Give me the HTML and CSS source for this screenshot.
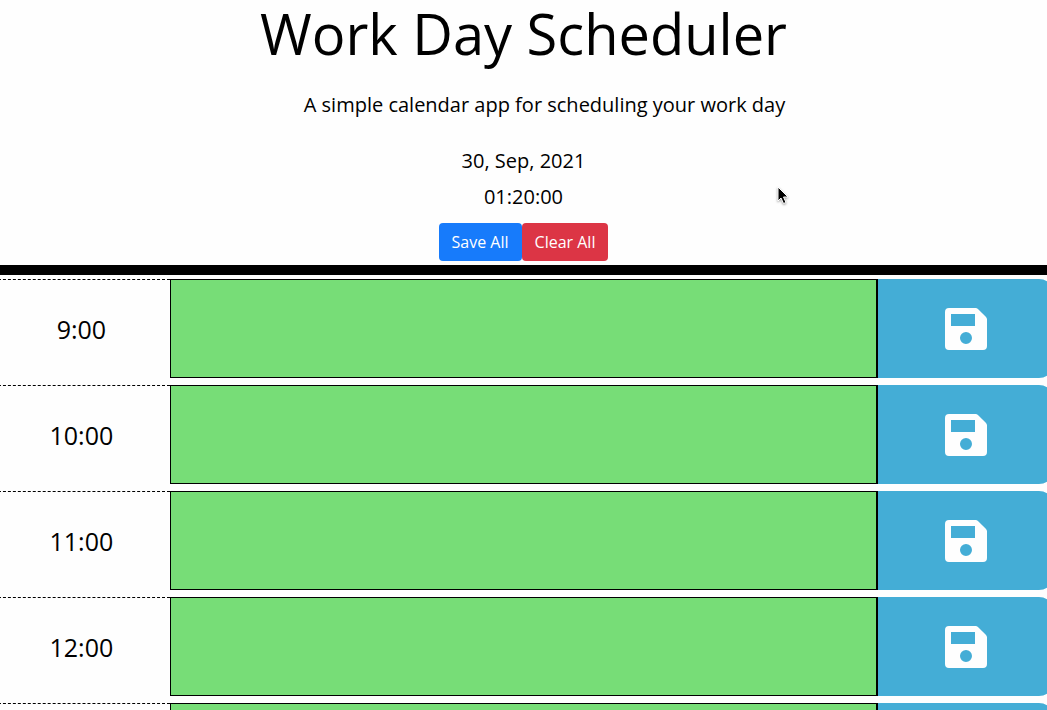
FILE: index.html
```html
<!DOCTYPE html>
<html lang="en">
<head>
<meta charset="utf-8">
<title>Work Day Scheduler</title>
<link rel="stylesheet" href="styles.css">
</head>
<body>
<svg class="icon-defs" aria-hidden="true">
  <symbol id="save" viewBox="0 0 42 42">
    <path fill-rule="evenodd" d="M4 0H30.500Q32 0 33.200 1.200L40.800 8.800Q42 10 42 11.500V38Q42 42 38 42H4Q0 42 0 38V4Q0 0 4 0ZM6 6V18H30V6ZM21 24A6 6 0 1 0 21 36A6 6 0 1 0 21 24Z"/>
  </symbol>
</svg>
<header class="header">
  <h1 class="title">Work Day Scheduler</h1>
  <p class="lead">A simple calendar app for scheduling your work day</p>
  <p class="date">30, Sep, 2021</p>
  <p class="clock">01:20:00</p>
  <div class="actions">
    <button class="btn btn-save" type="button">Save All</button>
    <button class="btn btn-clear" type="button">Clear All</button>
  </div>
</header>
<main class="schedule">
  <div class="row">
    <label class="hour" for="h9">9:00</label>
    <textarea class="task" id="h9"></textarea>
    <button class="save" type="button" aria-label="Save 9:00"><svg class="icon"><use href="#save"/></svg></button>
  </div>
  <div class="row">
    <label class="hour" for="h10">10:00</label>
    <textarea class="task" id="h10"></textarea>
    <button class="save" type="button" aria-label="Save 10:00"><svg class="icon"><use href="#save"/></svg></button>
  </div>
  <div class="row">
    <label class="hour" for="h11">11:00</label>
    <textarea class="task" id="h11"></textarea>
    <button class="save" type="button" aria-label="Save 11:00"><svg class="icon"><use href="#save"/></svg></button>
  </div>
  <div class="row">
    <label class="hour" for="h12">12:00</label>
    <textarea class="task" id="h12"></textarea>
    <button class="save" type="button" aria-label="Save 12:00"><svg class="icon"><use href="#save"/></svg></button>
  </div>
  <div class="row">
    <label class="hour" for="h13"></label>
    <textarea class="task" id="h13"></textarea>
    <button class="save" type="button" aria-label="Save"><svg class="icon"><use href="#save"/></svg></button>
  </div>
</main>
<svg class="cursor" viewBox="0 0 12 19" aria-hidden="true">
  <path d="M1 1V15L4 12L6.500 17.500L9 16.500L6.500 11H11Z"/>
</svg>
</body>
</html>
```
FILE: styles.css
```css
* {
  box-sizing: border-box;
}

body {
  position: relative;
  height: 100vh;
  margin: 0;
  overflow: hidden;
  background: #fefefe;
  color: #000;
  font-family: "Open Sans", "Noto Sans", sans-serif;
  font-size: 16px;
  line-height: 24px;
}

.icon-defs {
  position: absolute;
  width: 0;
  height: 0;
}

.header {
  display: flex;
  flex-direction: column;
  align-items: center;
  padding-bottom: 4px;
  border-bottom: 10px solid #000;
  text-align: center;
}

.title {
  margin: 0 0 23px;
  font-size: 56px;
  font-weight: 400;
  line-height: 66px;
}

.lead,
.date,
.clock {
  margin: 0;
  font-size: 20px;
  line-height: 32px;
}

.lead {
  margin-bottom: 24px;
  padding-left: 42px;
}

.date {
  margin-bottom: 4px;
}

.clock {
  margin-bottom: 10px;
}

.actions {
  display: flex;
}

.btn {
  padding: 7px 13px;
  border: 0;
  border-radius: 4px;
  color: #fff;
  font: inherit;
}

.btn-save {
  background: #177bfb;
}

.btn-clear {
  background: #dc3545;
}

.schedule {
  display: grid;
  gap: 7px;
  margin: 4px -7px 0;
}

.row {
  display: grid;
  grid-template-columns: 1fr 4fr 1fr;
  height: 99px;
}

.hour {
  display: flex;
  align-items: center;
  justify-content: center;
  border-top: 1px dashed #000;
  font-size: 25px;
}

.task {
  width: 100%;
  height: 100%;
  margin: 0;
  padding: 6px 12px;
  border: 1px solid #000;
  border-radius: 0;
  background: #77dd77;
  font: inherit;
  resize: none;
}

.save {
  display: flex;
  align-items: center;
  justify-content: center;
  padding: 0;
  border: 0;
  border-left: 1px solid #000;
  border-radius: 0 15px 15px 0;
  background: #44add6;
  color: #fefefe;
}

.icon {
  width: 42px;
  height: 42px;
  fill: currentColor;
}

.cursor {
  position: absolute;
  top: 186px;
  left: 777px;
  width: 12px;
  height: 19px;
  fill: #000;
  stroke: #fff;
  filter: drop-shadow(0 1px 1px #0006);
}
```
